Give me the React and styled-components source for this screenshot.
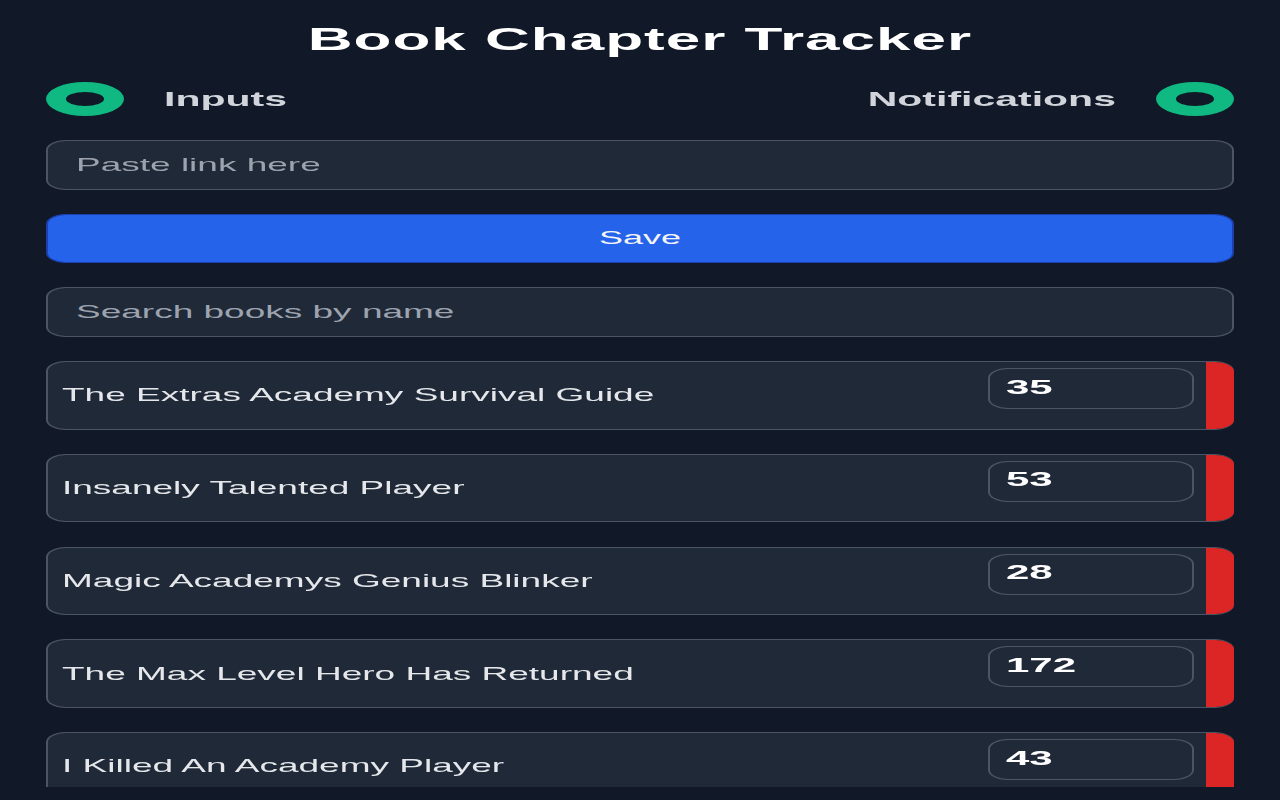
import styled, { createGlobalStyle } from 'styled-components';

const GlobalStyle = createGlobalStyle`
    html, body {
        margin: 0;
        padding: 0;
        background: #111827;
        overflow: hidden;
    }
    body {
        font-family: "Liberation Sans", Arial, sans-serif;
    }
`;

// the popup is drawn at half width and stretched to fill the window
const Stretch = styled.div`
    width: 640px;
    height: 800px;
    transform: scaleX(2);
    transform-origin: 0 0;
`;

const Popup = styled.div`
    box-sizing: border-box;
    padding: 21px 23px 0;
    display: flex;
    flex-direction: column;
`;

const Title = styled.h1`
    margin: 0;
    font-size: 31px;
    line-height: 37px;
    font-weight: 700;
    color: #ffffff;
    text-align: center;
    letter-spacing: 0.5px;
`;

const ToggleRow = styled.div`
    margin-top: 24px;
    height: 34px;
    display: flex;
    align-items: center;
    justify-content: space-between;
`;

const ToggleGroup = styled.div`
    display: flex;
    align-items: center;
    gap: 20px;
`;

const Ring = styled.span`
    box-sizing: border-box;
    width: 39px;
    height: 34px;
    border-radius: 50%;
    border-style: solid;
    border-color: #10b981;
    border-width: 10px 10px;
    background: #111827;
`;

const ToggleLabel = styled.span`
    font-size: 20.5px;
    font-weight: 700;
    color: #d1d5db;
`;

const Field = styled.input`
    box-sizing: border-box;
    width: 100%;
    height: 50px;
    margin-top: ${({ $top }) => $top}px;
    padding: 0 14px;
    border: 1px solid #4b5563;
    border-radius: 10px;
    background: #1f2937;
    color: #e5e7eb;
    font-family: inherit;
    font-size: 18.5px;
    outline: none;
    &::placeholder {
        color: #9ca3af;
    }
`;

const SaveButton = styled.button`
    box-sizing: border-box;
    width: 100%;
    height: 49px;
    margin-top: 24px;
    border: 1px solid #1e40af;
    border-radius: 10px;
    background: #2563eb;
    color: #f3f4f6;
    font-family: inherit;
    font-size: 18px;
`;

const List = styled.div`
    margin-top: 24px;
    height: 426px;
    overflow: hidden;
    display: flex;
    flex-direction: column;
    gap: 24.25px;
`;

const BookRow = styled.div`
    box-sizing: border-box;
    flex: 0 0 auto;
    height: 68.5px;
    display: flex;
    border: 1px solid #4b5563;
    border-right: none;
    border-radius: 10px;
    overflow: hidden;
    background: #1f2937;
`;

const BookName = styled.span`
    flex: 1;
    align-self: center;
    padding-left: 7px;
    font-size: 18.5px;
    color: #e5e7eb;
    white-space: nowrap;
`;

const Chapter = styled.input`
    box-sizing: border-box;
    width: 103px;
    height: 41px;
    margin: 6px 6px 0 0;
    padding: 0 0 4px 8px;
    border: 1px solid #4b5563;
    border-radius: 10px;
    background: #1f2937;
    color: #ffffff;
    font-family: inherit;
    font-size: 21px;
    font-weight: 700;
    outline: none;
    -moz-appearance: textfield;
    &::-webkit-outer-spin-button,
    &::-webkit-inner-spin-button {
        -webkit-appearance: none;
        margin: 0;
    }
`;

const Remove = styled.button`
    width: 14px;
    border: none;
    padding: 0;
    background: #dc2626;
`;

const books = [
    { name: 'The Extras Academy Survival Guide', chapter: 35 },
    { name: 'Insanely Talented Player', chapter: 53 },
    { name: 'Magic Academys Genius Blinker', chapter: 28 },
    { name: 'The Max Level Hero Has Returned', chapter: 172 },
    { name: 'I Killed An Academy Player', chapter: 43 },
];

const App = () => {
    return (
        <>
            <GlobalStyle />
            <Stretch>
                <Popup>
                    <Title>Book Chapter Tracker</Title>

                    <ToggleRow>
                        <ToggleGroup>
                            <Ring />
                            <ToggleLabel>Inputs</ToggleLabel>
                        </ToggleGroup>
                        <ToggleGroup>
                            <ToggleLabel>Notifications</ToggleLabel>
                            <Ring />
                        </ToggleGroup>
                    </ToggleRow>

                    <Field $top={24} placeholder="Paste link here" />
                    <SaveButton>Save</SaveButton>
                    <Field $top={24} placeholder="Search books by name" />

                    <List>
                        {books.map((book) => (
                            <BookRow key={book.name}>
                                <BookName>{book.name}</BookName>
                                <Chapter type="number" defaultValue={book.chapter} />
                                <Remove aria-label="remove" />
                            </BookRow>
                        ))}
                    </List>
                </Popup>
            </Stretch>
        </>
    )
}

export default App
